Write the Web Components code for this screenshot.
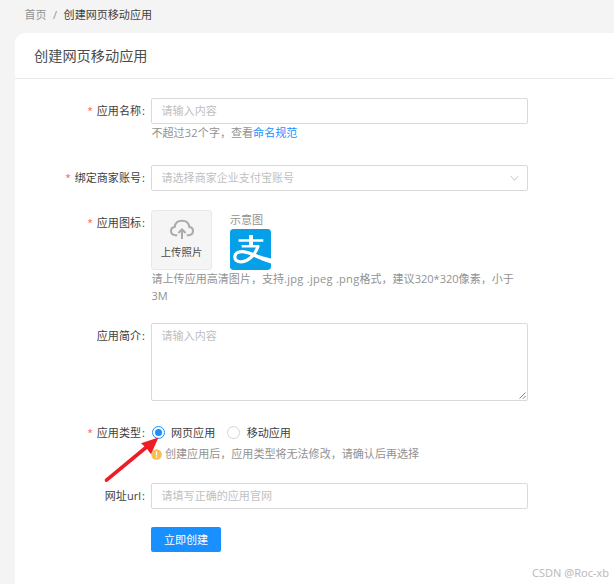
<!DOCTYPE html>
<html lang="zh-CN">
<head>
<meta charset="utf-8">
<title>创建网页移动应用</title>
<style>
html,body{margin:0;height:584px;overflow:hidden}
body{font-family:"Open Sans","Noto Sans CJK SC",sans-serif;font-size:11.05px;background:#f4f4f4}
</style>
</head>
<body>
<app-page></app-page>
<script>
function define(name, html){
  const t=document.createElement('template');
  t.innerHTML=html;
  customElements.define(name,class extends HTMLElement{
    constructor(){super();this.attachShadow({mode:'open'}).append(t.content.cloneNode(true));}
  });
}
define('bread-crumb',`<style>
:host{display:flex;height:33px;box-sizing:border-box;padding:6px 0 0 24.5px;line-height:18px;color:#929292}
.sep{width:17px;text-align:center}.cur{color:#404040}
</style><span>首页</span><span class="sep">/</span><span class="cur">创建网页移动应用</span>`);
define('page-card',`<style>
:host{display:block;flex:1;margin-left:15px;background:#fff;border-top-left-radius:10px}
header{height:46px;box-sizing:border-box;border-bottom:1px solid #e9e9e9;padding-left:19px;font-size:14.2px;line-height:46px;color:#4c4c4c}
main{padding:19px 0 0 36px;display:flex;flex-direction:column}
</style><header><slot name="title"></slot></header><main><slot></slot></main>`);
define('form-row',`<style>
:host{display:grid;grid-template-columns:95px 377px;column-gap:5px;height:var(--h)}
.label{display:flex;justify-content:flex-end;line-height:25px;color:#404040;white-space:nowrap}
.star{display:none;color:#ff4d4f;margin-right:4px;font-size:9.5px;line-height:26px}
:host([required]) .star{display:block}
.colon{width:4px;padding-left:1px}
:host([plain]) .colon{display:none}
</style><div class="label"><span class="star">*</span><slot name="label"></slot><span class="colon">:</span></div><div><slot></slot></div>`);
define('text-field',`<style>
:host{display:flex;justify-content:space-between;box-sizing:border-box;height:var(--fh,26px);border:1px solid #d9d9d9;border-radius:2px;padding:0 8px 0 9.5px;line-height:24px;color:#bfbfbf;position:relative}
svg{display:none}
:host([select]) .chev{display:block;align-self:center}
:host([area]) .grip{display:block;position:absolute;right:1px;bottom:1px}
</style><slot></slot>
<svg class="chev" width="9" height="7" viewBox="0 0 9 7" fill="none" stroke="#c4c4c4"><path d="M.7.9 4.5 5.3 8.3.9"/></svg>
<svg class="grip" width="7" height="7" viewBox="0 0 7 7" stroke="#666" stroke-width=".8"><path d="M.5 6.5 6.5.5M4 6.7 6.7 4"/></svg>`);
define('help-text',`<style>
:host{display:block;line-height:17.3px;color:#929292;padding:0 11px 0 .5px;line-break:anywhere}
</style><slot></slot>`);
define('latin-run',`<style>:host{letter-spacing:.27px}</style><slot></slot>`);
define('text-link',`<style>:host{color:#1890ff}</style><slot></slot>`);
define('upload-box',`<style>
:host{display:flex;flex-direction:column;align-items:center;box-sizing:border-box;width:61px;height:60px;background:#f5f5f5;border:1px solid #e8e8e8;border-radius:3px;padding-top:8px;color:#4a4a4a}
svg{display:block}span{line-height:17px;margin-top:4px;font-size:10.4px}
</style><svg width="26" height="21" viewBox="0 0 26 21" fill="none" stroke="#aaa" stroke-width="2"><path d="M8.2 16.2H6.6C3.8 16.2 2 14.4 2 12.1c0-2.3 1.6-3.8 3.6-4.1C6.2 4.2 9.2 1.8 13 1.8s6.8 2.4 7.4 6.2c2 .3 3.6 1.8 3.6 4.1 0 2.3-1.8 4.1-4.6 4.1h-1.6M13 20V11M9.4 14 13 10.4 16.6 14"/></svg><span><slot></slot></span>`);
define('sample-logo',`<style>
:host{display:block;color:#929292;line-height:17px;padding-top:1px}
svg{display:block;margin-top:1px;border-radius:3px}
</style><slot></slot>
<svg width="41" height="41" viewBox="0 0 41 41"><rect width="41" height="41" rx="3" fill="#06a0e8"/><path fill="none" stroke="#fff" stroke-width="2.5" d="M8.5 11.6H33.3M11.7 17.3H29.2"/><path fill="none" stroke="#fff" stroke-width="4" d="M21 6V17"/><path fill="none" stroke="#fff" stroke-width="3.2" d="M28.2 16.8C26 24 19.5 32.6 11.3 32.8 7 32.9 4.8 31 4.8 28c0-3.2 3-5.3 7.2-5.3 5.5 0 12 3.2 17 5.6"/><path fill="#fff" d="M23.5 24.2C29 26.3 35 28.3 41 29.4V34.6C34 32.4 28 29.6 22 26.8Z"/></svg>`);
define('side-by-side',`<style>:host{display:flex;gap:18px;height:60px}</style><slot></slot>`);
define('radio-option',`<style>
:host{display:flex;align-items:center;line-height:25px;color:#404040}
i{box-sizing:border-box;width:13px;height:13px;border:1px solid #d4d4d4;border-radius:50%;margin-right:6.5px;display:grid;place-items:center}
:host([checked]) i{border-color:#1890ff}
:host([checked]) i::after{content:"";width:7px;height:7px;border-radius:50%;background:#1890ff}
</style><i></i><slot></slot>`);
define('radio-set',`<style>:host{display:flex;gap:12px;height:25px;padding-left:.5px}</style><slot></slot>`);
define('warn-text',`<style>
:host{display:flex;align-items:center;line-height:18px;color:#929292}
svg{margin-right:3px}
</style><svg width="11" height="11" viewBox="0 0 11 11"><circle cx="5.5" cy="5.5" r="5.3" fill="#f8be52"/><path d="M5.5 2.2V6.4M5.5 7.5V8.8" stroke="#fff" stroke-width="1.2"/></svg><slot></slot>`);
define('primary-button',`<style>
:host{display:block;width:70px;height:25px;line-height:25px;text-align:center;background:#1890ff;color:#fff;border-radius:2px}
</style><slot></slot>`);
define('pointer-arrow',`<style>:host{position:absolute;left:100px;top:434px}svg{display:block}</style>
<svg width="62" height="52" viewBox="0 0 62 52"><path d="M6.5 46.2 46 13.5" stroke="#ee1c25" stroke-width="3.6" stroke-linecap="round"/><path d="M58.5 3.5 51 20.3 46.6 14.3 41 9.2Z" fill="#ee1c25"/></svg>`);
define('water-mark',`<style>:host{position:absolute;left:532px;top:564px;font:11px/18px "Noto Sans","Open Sans",sans-serif;color:#bbb;white-space:pre}</style><slot></slot>`);
define('app-page',`<style>
:host{display:flex;flex-direction:column;height:584px;position:relative}
</style>
<bread-crumb></bread-crumb>
<page-card><span slot="title">创建网页移动应用</span>
<form-row required style="--h:67px"><span slot="label">应用名称</span><text-field>请输入内容</text-field><help-text>不超过<latin-run>32</latin-run>个字，查看<text-link>命名规范</text-link></help-text></form-row>
<form-row required style="--h:45px"><span slot="label">绑定商家账号</span><text-field select>请选择商家企业支付宝账号</text-field></form-row>
<form-row required style="--h:113px"><span slot="label">应用图标</span><side-by-side><upload-box>上传照片</upload-box><sample-logo>示意图</sample-logo></side-by-side><help-text>请上传应用高清图片，支持<latin-run>.jpg .jpeg .png</latin-run>格式，建议320*320像素，小于<br>3M</help-text></form-row>
<form-row style="--h:97px"><span slot="label">应用简介</span><text-field area style="--fh:78px">请输入内容</text-field></form-row>
<form-row required style="--h:63px"><span slot="label">应用类型</span><radio-set><radio-option checked>网页应用</radio-option><radio-option>移动应用</radio-option></radio-set><warn-text>创建应用后，应用类型将无法修改，请确认后再选择</warn-text></form-row>
<form-row style="--h:44px"><span slot="label">网址url</span><text-field>请填写正确的应用官网</text-field></form-row>
<form-row plain style="--h:25px"><primary-button>立即创建</primary-button></form-row>
</page-card>
<pointer-arrow></pointer-arrow>
<water-mark>CSDN @Roc-xb</water-mark>`);
</script>
</body>
</html>
